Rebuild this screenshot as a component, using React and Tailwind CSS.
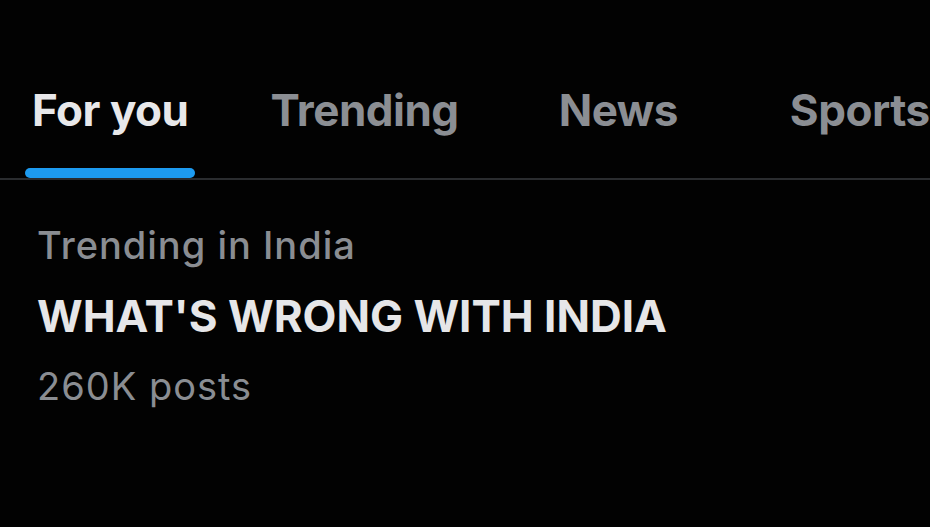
import React from 'react';

const tabs = [
  { label: 'For you', active: true, ml: 'ml-[32px]' },
  { label: 'Trending', ml: 'ml-[82px]' },
  { label: 'News', ml: 'ml-[100px]' },
  { label: 'Sports', ml: 'ml-[112px]' },
];

export default function App() {
  return (
    <div className="w-[930px] h-[527px] bg-[#020202] overflow-hidden font-['Inter',sans-serif]">
      {/* Tabs */}
      <div className="pt-[85px] flex border-b-2 border-[#2a2c2f] whitespace-nowrap">
        {tabs.map((t) => (
          <div key={t.label} className={`${t.ml} flex flex-col shrink-0`}>
            <span
              className={`text-[44px] leading-[50px] font-bold tracking-[-0.5px] ${
                t.active ? 'text-[#e8e8ea]' : 'text-[#8b8e93]'
              }`}
            >
              {t.label}
            </span>
            <div
              className={`mt-[33px] -mx-[7px] h-[10px] rounded-full ${
                t.active ? 'bg-[#1d9bf0]' : 'bg-transparent'
              }`}
            />
          </div>
        ))}
      </div>

      {/* Trend item */}
      <div className="pl-[37px] pt-[43px]">
        <p className="text-[38px] leading-[44px] font-medium text-[#8a8d92] tracking-[1px]">
          Trending in India
        </p>
        <p className="mt-[24px] text-[44px] leading-[50px] font-bold text-[#e6e6e8]">
          WHAT'S WRONG WITH INDIA
        </p>
        <p className="mt-[23px] text-[38px] leading-[44px] text-[#8a8d92] tracking-[1px]">
          260K posts
        </p>
      </div>
    </div>
  );
}
